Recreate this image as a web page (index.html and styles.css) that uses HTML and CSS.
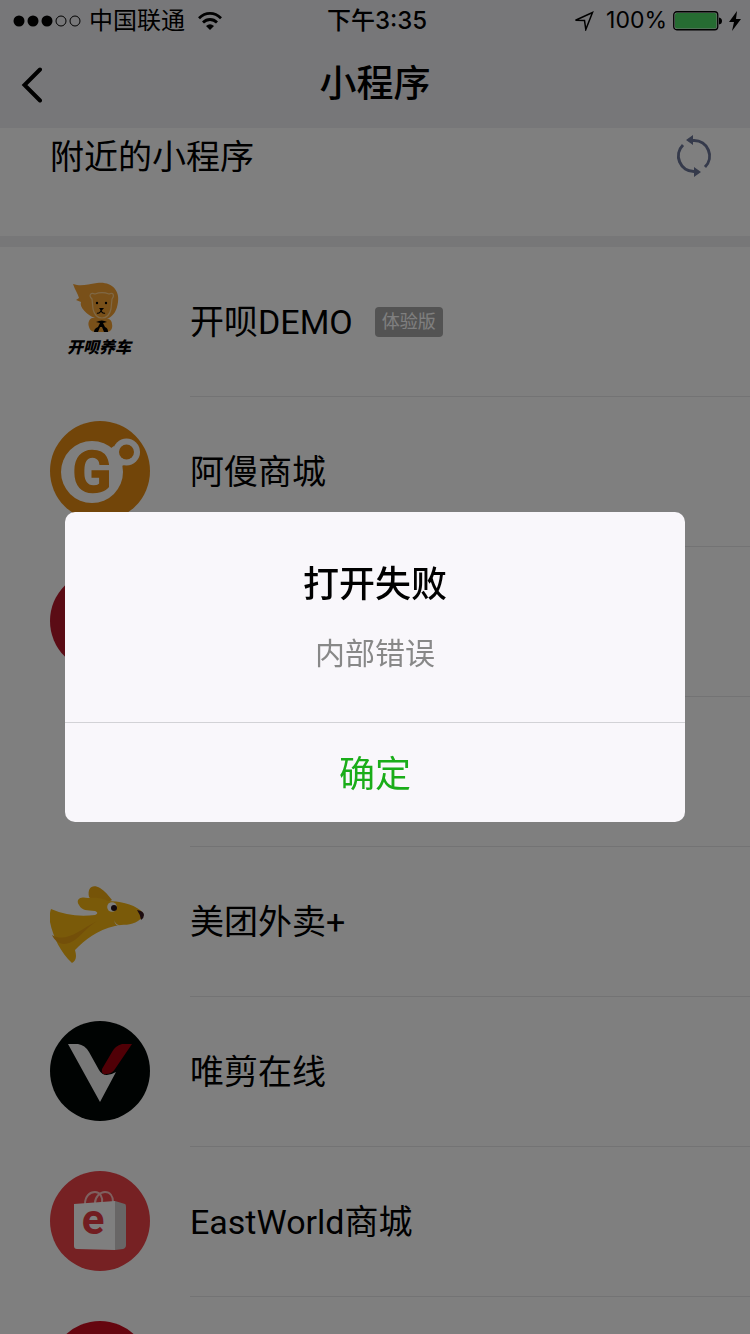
FILE: index.html
```html
<!DOCTYPE html>
<html lang="zh-CN">
<head>
<meta charset="utf-8">
<meta name="viewport" content="width=device-width, initial-scale=1">
<title>小程序</title>
<link rel="stylesheet" href="styles.css">
</head>
<body>
<div class="screen">
  <header class="top">
    <div class="status">
      <div class="status-side">
        <svg class="signal" viewBox="0 0 68 12" width="68" height="12"><g fill="#000"><circle cx="6" cy="6" r="5.5"/><circle cx="20" cy="6" r="5.5"/><circle cx="34" cy="6" r="5.5"/></g><g fill="none" stroke="#000"><circle cx="48" cy="6" r="5"/><circle cx="62" cy="6" r="5"/></g></svg>
        <span>中国联通</span>
        <svg class="wifi" viewBox="0 0 24 18" width="24" height="18"><g fill="none" stroke="#000" stroke-width="2.8"><path d="M1 6.200C7.500-.2 16.500-.2 23 6.200"/><path d="M5 10.500C9 6.500 15 6.500 19 10.500"/></g><path d="M8 14q4-3.500 8 0l-4 4z"/></svg>
      </div>
      <time class="clock">下午3:35</time>
      <div class="status-side status-right">
        <svg class="locate" viewBox="0 0 20 20" width="20" height="20"><path d="M1.500 9.200 18.500 1.500 11.800 18.500 10.500 9.500Z" fill="none" stroke="#000" stroke-width="1.500"/></svg>
        <span>100%</span>
        <svg class="battery" viewBox="0 0 50 20" width="50" height="20"><rect x=".75" y=".75" width="44" height="18" rx="3" fill="none" stroke="#000" stroke-width="1.300"/><rect x="2" y="2" width="41.500" height="15.500" rx="2" fill="#4cd964"/><path d="M46 6.500q3 .5 3 3.500t-3 3.500z"/></svg>
        <svg class="bolt" viewBox="0 0 12 20" width="12" height="20"><path d="M8 0 0 11h5L3 20 12 8H7z"/></svg>
      </div>
    </div>
    <nav class="nav">
      <button class="back" type="button" aria-label="返回"><svg viewBox="0 0 22 36" width="22" height="36"><path d="M20 2.500 4.500 18 20 33.500" fill="none" stroke="#000" stroke-width="4" stroke-linecap="round"/></svg></button>
      <h1 class="title">小程序</h1>
    </nav>
  </header>

  <main>
    <section class="nearby">
      <h2 class="name">附近的小程序</h2>
      <button class="refresh" type="button" aria-label="刷新"><svg viewBox="0 0 36 42" width="36" height="42"><g fill="none" stroke="#6a7496" stroke-width="3"><path d="M15 5.500h3A15.500 15.500 0 0 1 29 32"/><path d="M22 36.500h-4A15.500 15.500 0 0 1 7 10"/></g><path fill="#6a7496" d="M17 0v10L10 5zM18 32v10l7-5z"/></svg></button>
    </section>

    <ul class="list">
      <li class="row">
        <svg class="logo" viewBox="0 0 100 100"><path fill="#f3a033" d="M23 13c9 3 14 0 24-1 14-2 23 7 21 19-1 8-4 13-9 16H45C37 44 29 36 31 31l-5-2 3-2c-1-4-4-8-6-14z"/><path d="M42 47c-4 2-4 6-3 9 1 4 4 5 7 5h11c4 0 6-4 5-8 0-3-2-5-5-6z" fill="#f3a033"/><path d="M42 28c-4-4-1-7 3-5 5-2 9-2 14 0 4-2 6 1 3 5l-1 10q-2 9-9 9t-9-9z" fill="#f3a033" stroke="#ffd08a" stroke-width="1.200"/><path d="M44 61c0-3 2-4 4-5l2-4-4-1q6-3 11 0l-4 1 2 4c2 1 3 2 3 5h-4l-2-5h-2l-2 5z"/><path d="M47 42q2 1 4-2 2 3 4 2M51 37v4" fill="none" stroke="#000" stroke-width="1.200"/><circle cx="47" cy="32" r="1.200"/><circle cx="56" cy="32" r="1.200"/><path d="M49 37h5l-2.500 3z"/><text class="logo-caption" x="49" y="82" text-anchor="middle" font-size="16">开呗养车</text></svg>
        <div class="cell"><span class="name">开呗DEMO</span><span class="tag">体验版</span></div>
      </li>
      <li class="row">
        <svg class="logo" viewBox="0 0 100 100"><circle cx="50" cy="50" r="50" fill="#e48a13"/><g fill="#fff"><circle cx="42" cy="51" r="31"/><circle cx="76.500" cy="31" r="13.500"/><path d="M57 28q4 0 7-3l10 19q-4 1-3 7z"/></g><circle cx="76.500" cy="31" r="7.500" fill="#e48a13"/><text class="logo-letter" x="42" y="71" text-anchor="middle" font-size="57" fill="#e48a13" stroke="#e48a13" stroke-width="1.500">G</text></svg>
        <div class="cell"><span class="name">阿僈商城</span></div>
      </li>
      <li class="row">
        <svg class="logo" viewBox="0 0 100 100"><circle cx="50" cy="50" r="50" fill="#b6182a"/></svg>
        <div class="cell"></div>
      </li>
      <li class="row"><div class="logo"></div><div class="cell"></div></li>
      <li class="row">
        <svg class="logo" viewBox="0 0 100 100"><path fill="#eda911" d="M39 26c-2-10 4-13 11-9 5 3 8 7 12 12l-12 7z"/><path fill="#f4b513" d="M29 34c-4-6 2-9 9-7 8-1 16 1 20 3 10 0 25 3 32 9 5 4 4 7-2 11-7 5-15 3-23 5C47 59 35 69 25 79c2 7 1 11-3 13C11 82 3 66 0 51c-1-5 0-10 1-13 14 6 28 8 44 6 3-1 3-3 0-4-8-1-13 0-16-6z"/><path fill="#e79e12" d="M2 64c14 8 26-4 45-14C31 61 27 72 14 73 9 73 4 69 2 64z"/><path fill="#fff" d="M64 49q2 6 7 5-5 3-7-5z"/><circle cx="62" cy="36" r="4.800" fill="#fff"/><circle cx="64" cy="37" r="3" fill="#25121a"/><path fill="#391820" d="M87 39q7 1 7 5 0 3-3 5-1-6-4-10z"/></svg>
        <div class="cell"><span class="name">美团外卖+</span></div>
      </li>
      <li class="row">
        <svg class="logo" viewBox="0 0 100 100"><circle cx="50" cy="50" r="50" fill="#000604"/><path fill="#f0f0f0" d="M18 23h10q7 1 11 8l10 18q5 9 17 2L50 81z"/><path fill="#a0000c" d="M82 23H72q-7 2-10 8L52 48q-1 6 4 5 6 0 9-5z"/></svg>
        <div class="cell"><span class="name">唯剪在线</span></div>
      </li>
      <li class="row">
        <svg class="logo" viewBox="0 0 100 100"><circle cx="50" cy="50" r="50" fill="#ec4247"/><g fill="none" stroke="#ffc3c0" stroke-width="2"><path d="M35 33c0-8 5-12 10-12s8 5 7 11"/><path d="M45 32c0-6 5-11 10-11s8 4 8 10"/></g><path fill="#fff" d="M24 33 65 30v49l-38-1q-3 0-3-3z"/><path fill="#d0cccc" d="M65 30 75 33q1 0 1 3v38q0 3-3 4l-8 1z"/><text class="logo-letter" x="43" y="63" text-anchor="middle" font-size="42" fill="#e43b43">e</text></svg>
        <div class="cell"><span class="name">EastWorld商城</span></div>
      </li>
      <li class="row">
        <svg class="logo" viewBox="0 0 100 100"><circle cx="50" cy="50" r="50" fill="#ca0d1f"/></svg>
        <div class="cell"></div>
      </li>
    </ul>
  </main>
</div>

<div class="mask">
  <div class="dialog" role="alertdialog" aria-labelledby="dialog-title" aria-describedby="dialog-text">
    <div class="dialog-body">
      <h2 class="dialog-title" id="dialog-title">打开失败</h2>
      <p class="dialog-text" id="dialog-text">内部错误</p>
    </div>
    <button class="dialog-button" type="button">确定</button>
  </div>
</div>
</body>
</html>
```
FILE: styles.css
```css
* { box-sizing: border-box; }
body, h1, h2, p, ul { margin: 0; padding: 0; }
body {
  font-family: Roboto, "Noto Sans CJK SC", sans-serif;
  color: #000;
  background: #fff;
}
button { padding: 0; border: 0; background: none; font: inherit; }
svg { display: block; flex: none; }
.screen { height: 100vh; overflow: hidden; }
.top { background: #efeff3; }
.status {
  display: grid;
  grid-template-columns: 1fr auto 1fr;
  align-items: center;
  height: 41px;
  padding: 0 9px 0 13px;
  font-family: Inter, "Noto Sans CJK SC", sans-serif;
  font-size: 24px;
  line-height: 41px;
}
.status-side { display: flex; align-items: center; gap: 8px; }
.status-right { justify-content: flex-end; gap: 6px; font-size: 23px; }
.wifi { margin-left: 5px; }
.locate { margin-right: 6px; }
.clock { font-weight: 500; }
.nav {
  display: grid;
  grid-template-columns: 1fr auto 1fr;
  align-items: center;
  height: 87px;
  padding: 0 20px;
}
.back { justify-self: start; }
.title { font-size: 37px; font-weight: 500; line-height: 87px; }
.nearby {
  display: flex;
  justify-content: space-between;
  align-items: flex-start;
  height: 119px;
  padding: 7px 38px 0 50px;
  border-bottom: 11px solid #efeff0;
}
.name { font-size: 34px; font-weight: 400; line-height: 44px; white-space: nowrap; }
.list { list-style: none; }
.row { display: flex; align-items: stretch; gap: 40px; height: 150px; padding-left: 50px; }
.logo { width: 100px; height: 100px; flex: none; margin-top: 24px; }
.logo-caption { font-family: "Noto Sans CJK SC", sans-serif; font-weight: 900; font-style: italic; }
.logo-letter { font-family: Roboto, sans-serif; font-weight: 700; }
.cell {
  display: flex;
  flex: 1;
  align-items: center;
  gap: 22px;
  border-bottom: 1px solid #e6e6e8;
}
.tag {
  padding: 0 7px;
  border-radius: 4px;
  background: #a6a6a6;
  color: #fff;
  font-size: 18px;
  line-height: 30px;
}
.mask {
  position: fixed;
  inset: 0;
  display: flex;
  align-items: center;
  justify-content: center;
  padding: 0 65px;
  background: rgba(0, 0, 0, .5);
}
.dialog {
  width: 100%;
  max-width: 640px;
  border-radius: 10px;
  overflow: hidden;
  background: #f9f7fb;
  text-align: center;
}
.dialog-body { padding: 46px 40px; }
.dialog-title { font-size: 36px; font-weight: 500; line-height: 54px; }
.dialog-text { margin-top: 20px; color: #888; font-size: 30px; line-height: 44px; }
.dialog-button {
  display: block;
  width: 100%;
  height: 100px;
  padding-bottom: 4px;
  border-top: 1px solid #d2d2d6;
  color: #1aad19;
  font-size: 36px;
}
```
